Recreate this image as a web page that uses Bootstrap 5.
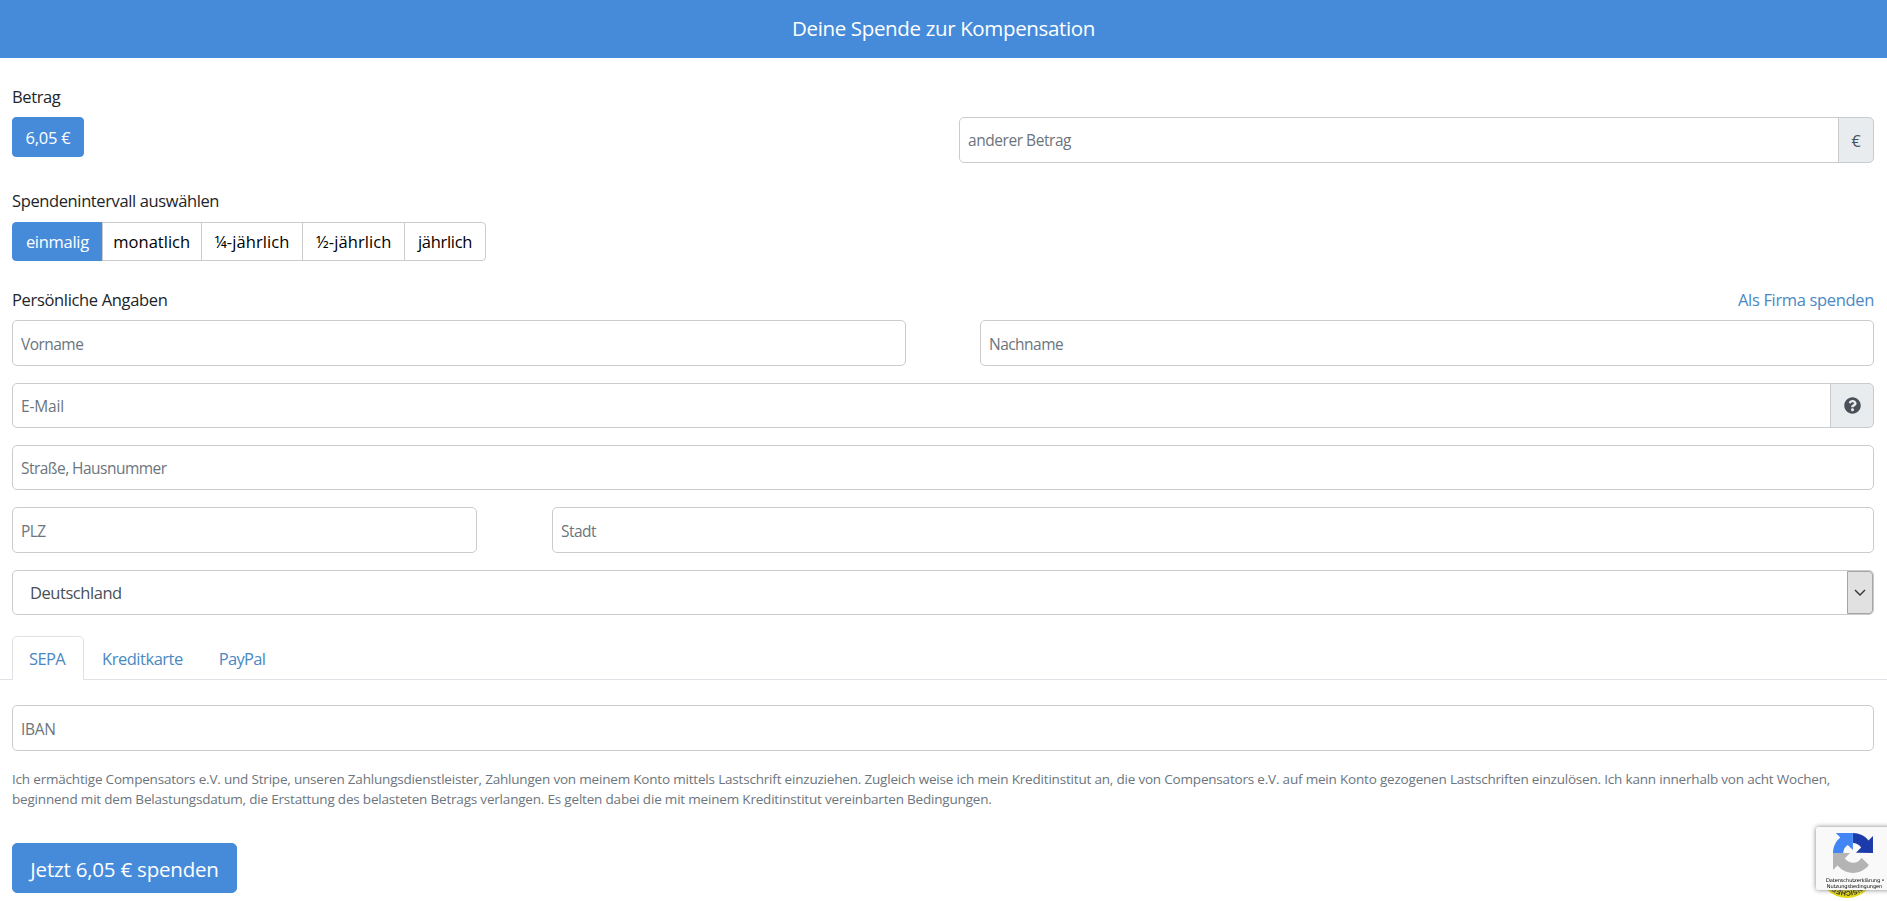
<!DOCTYPE html>
<html lang="de">
<head>
<meta charset="utf-8">
<meta name="viewport" content="width=device-width, initial-scale=1">
<title>Deine Spende zur Kompensation</title>
<link href="https://cdn.jsdelivr.net/npm/bootstrap@5.3.0/dist/css/bootstrap.min.css" rel="stylesheet">
<style>
:root{--brand:#468bda;--link:#4a89c4;--line:#c9cbcd}
body{font-family:"Open Sans","Noto Sans",sans-serif;font-size:16.5px;line-height:26px;letter-spacing:-.38px;color:#212529;overflow:hidden}
.topbar{height:58px;padding-bottom:2px;background:var(--brand);color:#fff;font-size:20.5px;letter-spacing:-.35px}
.page{padding:0 13px 0 12px}
.btn{font-size:16.5px;line-height:26px;border-radius:4px}
.btn-brand{background:var(--brand);border-color:var(--brand);color:#fff}
.amount{width:72px;height:40px;padding:7px 0 5px;letter-spacing:-.2px}
.split{display:grid}
.split-amount{grid-template-columns:1fr 915px;margin-top:7px}
.split-name{grid-template-columns:1fr 1fr;gap:74px;margin-top:7px}
.split-city{grid-template-columns:465px 1fr;gap:75px}
.form-control{height:46px;padding:2px 8px 0;font-size:15.5px;letter-spacing:-.53px;border-color:var(--line);border-radius:5px}
.form-control::placeholder{color:#6c757d}
.h45{height:45px;padding-top:0}
.gap-above{margin-top:17px}
.input-group-text{background:#e9ecef;border-color:var(--line);color:#495057;padding:0;justify-content:center;border-radius:5px;font-size:16px}
.addon-euro{width:36px;padding-top:2px}
.addon-help{width:44px}
.intervals{margin-top:8px;width:474px}
.intervals .btn{height:39px;padding:5px 0;border-color:var(--line);color:#000;background:#fff}
.intervals .btn.btn-brand{background:var(--brand);border-color:var(--brand);color:#fff}
.lnk{color:var(--link);text-decoration:none}
.country{height:45px;border:1px solid var(--line);border-radius:5px;padding-left:17px;color:#495057;letter-spacing:-.45px}
.country-arrow{width:26px;background:#e1e1e1;border:1px solid #a5a5a5;border-radius:0 4px 4px 0}
.nav-tabs{padding-left:12px;height:44px;border-color:#dee2e6}
.nav-tabs .nav-link{height:44px;padding:9px 17px;color:var(--link);border-radius:5px 5px 0 0;letter-spacing:-.47px}
.nav-tabs .nav-link.active{color:var(--link);border-color:#dee2e6 #dee2e6 #fff;width:72px;padding-left:16px;letter-spacing:-.62px}
.terms{font-size:13.5px;line-height:20px;letter-spacing:-.193px;color:#6c757d}
.btn-donate{width:225px;height:50px;font-size:20.5px;letter-spacing:-.2px;padding:2px 0 0;border-radius:5px}
.captcha{position:fixed;left:1816px;top:827px;width:76px;height:63px;background:#f9f9f9;border-radius:2px;box-shadow:0 0 5px #808080}
.captcha svg{position:absolute;left:17px;top:6px}
.captcha-text{position:absolute;left:10px;top:50px;width:57px;text-align:center;font:5.1px/6px "DejaVu Sans",sans-serif;letter-spacing:-.12px;color:#000;white-space:nowrap}
.seal{position:fixed;left:1818px;top:840px}
</style>
</head>
<body>
<header class="topbar d-flex align-items-center justify-content-center">Deine Spende zur Kompensation</header>
<main>
  <div class="page">
    <div style="padding-top:26px">Betrag</div>
    <div class="split split-amount">
      <div><button class="btn btn-brand amount">6,05 €</button></div>
      <div class="input-group flex-nowrap">
        <input class="form-control" placeholder="anderer Betrag" style="padding-top:0;letter-spacing:-.45px">
        <span class="input-group-text addon-euro">€</span>
      </div>
    </div>
    <div style="margin-top:25px">Spendenintervall auswählen</div>
    <div class="btn-group intervals d-flex">
      <button class="btn btn-brand flex-grow-0" style="flex-basis:91px;letter-spacing:-.28px">einmalig</button>
      <button class="btn flex-grow-0" style="flex-basis:100px">monatlich</button>
      <button class="btn flex-grow-0" style="flex-basis:103px;letter-spacing:.09px">¼-jährlich</button>
      <button class="btn flex-grow-0" style="flex-basis:103px;letter-spacing:.09px">½-jährlich</button>
      <button class="btn flex-grow-0" style="flex-basis:82px;letter-spacing:-.3px">jährlich</button>
    </div>
    <div class="d-flex justify-content-between" style="margin-top:26px;letter-spacing:-.335px"><span>Persönliche Angaben</span><a class="lnk" href="#">Als Firma spenden</a></div>
    <div class="split split-name">
      <input class="form-control" placeholder="Vorname"><input class="form-control" placeholder="Nachname">
    </div>
    <div class="input-group flex-nowrap gap-above">
      <input class="form-control h45" placeholder="E-Mail" style="letter-spacing:-.17px">
      <span class="input-group-text addon-help">
        <svg width="17" height="17" viewBox="0 0 512 512" fill="#495057"><path d="M504 256c0 137-111 248-248 248S8 393 8 256 119 8 256 8s248 111 248 248zM262.700 90c-54.500 0-89.300 23-116.500 63.800-3.500 5.300-2.400 12.400 2.700 16.300l34.700 26.300c5.200 3.900 12.600 3 16.700-2.100 17.900-22.700 30.100-35.800 57.300-35.800 20.400 0 45.700 13.100 45.700 33 0 15-12.400 22.700-32.500 34C247.100 238.500 216 254.900 216 296v4c0 6.600 5.400 12 12 12h56c6.600 0 12-5.400 12-12v-1.300c0-28.500 83.200-29.600 83.200-106.700 0-58-60.200-102-116.500-102zM256 338c-25.400 0-46 20.600-46 46s20.600 46 46 46 46-20.600 46-46-20.600-46-46-46z"/></svg>
      </span>
    </div>
    <input class="form-control h45 gap-above" placeholder="Straße, Hausnummer">
    <div class="split split-city gap-above">
      <input class="form-control" placeholder="PLZ"><input class="form-control" placeholder="Stadt">
    </div>
    <div class="country d-flex justify-content-between gap-above">
      <span class="align-self-center">Deutschland</span>
      <span class="country-arrow d-flex align-items-center justify-content-center"><svg width="12" height="8" viewBox="0 0 12 8" fill="none" stroke="#333" stroke-width="1.400"><path d="M1 1l5 5 5-5"/></svg></span>
    </div>
  </div>
  <ul class="nav nav-tabs" style="margin-top:21px">
    <li class="nav-item"><a class="nav-link active" href="#">SEPA</a></li>
    <li class="nav-item"><a class="nav-link" href="#">Kreditkarte</a></li>
    <li class="nav-item"><a class="nav-link" href="#" style="letter-spacing:-.7px">PayPal</a></li>
  </ul>
  <div class="page">
    <input class="form-control" placeholder="IBAN" style="margin-top:25px;letter-spacing:-.3px">
    <p class="terms mb-0" style="margin-top:18px">Ich ermächtige Compensators e.V. und Stripe, unseren Zahlungsdienstleister, Zahlungen von meinem Konto mittels Lastschrift einzuziehen. Zugleich weise ich mein Kreditinstitut an, die von Compensators e.V. auf mein Konto gezogenen Lastschriften einzulösen. Ich kann innerhalb von acht Wochen, beginnend mit dem Belastungsdatum, die Erstattung des belasteten Betrags verlangen. Es gelten dabei die mit meinem Kreditinstitut vereinbarten Bedingungen.</p>
    <button class="btn btn-brand btn-donate" style="margin-top:34px">Jetzt 6,05 € spenden</button>
  </div>
</main>
<svg class="seal" width="58" height="58" viewBox="0 0 58 58">
  <circle cx="29" cy="29" r="29" fill="#e2d91c"/>
  <path id="sealEdge" d="M51 29A22 22 0 0 1 7 29" fill="none"/>
  <text font-family="Liberation Sans,sans-serif" font-size="7" font-weight="bold" fill="#2b2a10"><textPath href="#sealEdge" startOffset="50%" text-anchor="middle">NSICHER</textPath></text>
</svg>
<div class="captcha">
  <svg width="40" height="40" viewBox="0 0 64 64">
    <path fill="#1c3aa9" d="M64 31.955l-.033-1.370V4.687l-7.160 7.160C50.948 4.674 42.033.093 32.050.093v15.900c.485 0 .860.057 1.135.163 4.976.393 9.288 3.140 11.828 7.124l-8.307 8.307 27.295.368"/>
    <path fill="#4285f4" d="M31.862.094l-1.370.033H4.594l7.160 7.160C4.580 13.147 0 22.060 0 32.046h16.260c0-.485.057-.860.163-1.135.393-4.976 3.140-9.288 7.124-11.828l8.307 8.307.008-27.295"/>
    <path fill="#b4b4b4" d="M.001 32.045l.033 1.370v25.898l7.160-7.160c5.860 7.173 14.774 11.754 24.760 11.754 10.388 0 19.622-4.960 25.458-12.640l-11.736-11.860a15.550 15.550 0 0 1-4.754 5.334c-2.050 1.600-4.952 2.906-8.968 2.906-.485 0-.860-.057-1.135-.163-4.976-.393-9.288-3.140-11.828-7.124l8.307-8.307L.001 32.045"/>
  </svg>
  <div class="captcha-text">Datenschutzerklärung •<br>Nutzungsbedingungen</div>
</div>
<script src="https://cdn.jsdelivr.net/npm/bootstrap@5.3.0/dist/js/bootstrap.bundle.min.js"></script>
</body>
</html>
